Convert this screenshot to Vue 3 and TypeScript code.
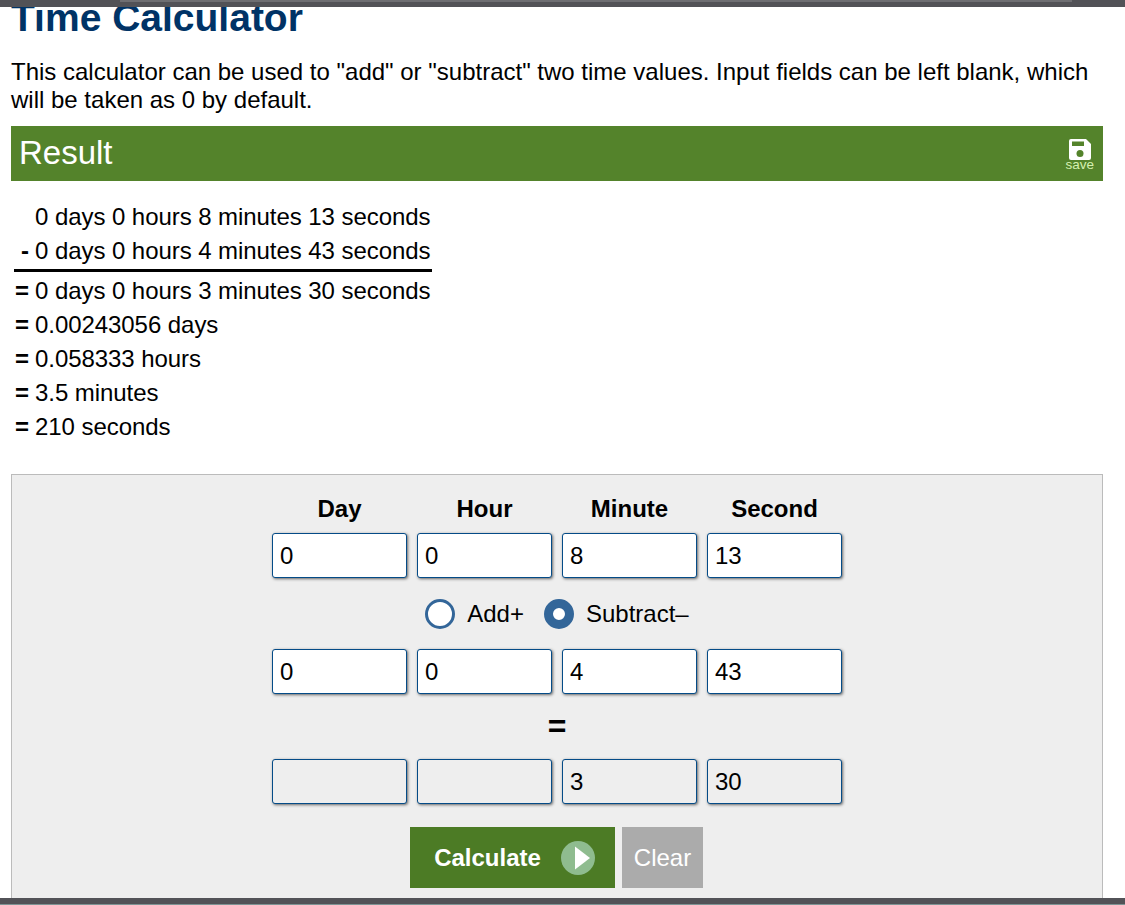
<script setup lang="ts">
const units = ['Day', 'Hour', 'Minute', 'Second'];
const first = ['0', '0', '8', '13'];
const second = ['0', '0', '4', '43'];
const answer = ['', '', '3', '30'];

const rows: [sign: string, text: string][] = [
  ['=', '0.00243056 days'],
  ['=', '0.058333 hours'],
  ['=', '3.5 minutes'],
  ['=', '210 seconds'],
];
</script>

<template>
  <div class="page">
    <div class="bar top"></div>
    <main class="content">
      <h1>Time Calculator</h1>
      <p class="intro">
        This calculator can be used to "add" or "subtract" two time values. Input fields can be left blank, which
        will be taken as 0 by default.
      </p>

      <div class="result-head">
        <span class="result-title">Result</span>
        <div class="save">
          <svg width="22" height="21" viewBox="0 0 22 21">
            <path d="M2 0H17L22 5V19A2 2 0 0 1 20 21H2A2 2 0 0 1 0 19V2A2 2 0 0 1 2 0Z" fill="#fff" />
            <rect x="3" y="2.5" width="12" height="4.5" fill="#54832b" />
            <circle cx="11" cy="14.5" r="3.5" fill="#54832b" />
          </svg>
          <span>save</span>
        </div>
      </div>

      <div class="result-body">
        <div class="line"><b></b>0 days 0 hours 8 minutes 13 seconds</div>
        <div class="line"><b>-</b>0 days 0 hours 4 minutes 43 seconds</div>
        <div class="rule"></div>
        <div class="line"><b>=</b>0 days 0 hours 3 minutes 30 seconds</div>
        <div v-for="[sign, text] of rows" :key="text" class="line">
          <b>{{ sign }}</b>{{ text }}
        </div>
      </div>

      <form class="panel" @submit.prevent>
        <div class="fields heads">
          <strong v-for="unit of units" :key="unit">{{ unit }}</strong>
        </div>
        <div class="fields">
          <input v-for="(v, i) of first" :key="i" type="text" :value="v" />
        </div>
        <div class="ops">
          <span class="radio"></span>
          <span class="op-label">Add+</span>
          <span class="radio on"></span>
          <span class="op-label">Subtract–</span>
        </div>
        <div class="fields">
          <input v-for="(v, i) of second" :key="i" type="text" :value="v" />
        </div>
        <div class="equals">=</div>
        <div class="fields">
          <input v-for="(v, i) of answer" :key="i" class="readonly" type="text" :value="v" readonly />
        </div>
        <div class="buttons">
          <button class="calc" type="submit">
            Calculate
            <svg width="34" height="34" viewBox="0 0 34 34">
              <circle cx="17" cy="17" r="17" fill="#8fbc8f" />
              <path d="M14 5.5L29 17L14 28.5Z" fill="#fff" />
            </svg>
          </button>
          <button class="clear" type="button">Clear</button>
        </div>
      </form>
    </main>
    <div class="bar bottom"></div>
  </div>
</template>

<style>
html,
body {
  margin: 0;
  overflow: hidden;
}
</style>

<style scoped>
.page {
  display: flex;
  flex-direction: column;
  height: 905px;
  font-family: 'Liberation Sans', Arial, sans-serif;
  font-size: 24px;
  color: #000;
  background: #fff;
}

.bar {
  flex: none;
  height: 7px;
  background: #525257;
}

.bar.top {
  background: linear-gradient(#6e6e72, #6e6e72) 120px 0 / 952px 2px no-repeat, #525257;
}

.bar.bottom {
  box-shadow: inset 0 -1px #7d9494;
}

.content {
  flex: 1;
  min-height: 0;
  overflow: hidden;
  padding: 0 22px 0 11px;
}

h1 {
  margin: -10px 0 0;
  font-size: 39px;
  line-height: 42px;
  font-weight: bold;
  color: #003366;
}

.intro {
  margin: 19px 0 0;
  line-height: 28px;
}

.result-head {
  display: flex;
  justify-content: space-between;
  align-items: center;
  height: 55px;
  margin-top: 12px;
  padding: 0 9px 0 8px;
  background: #54832b;
  color: #fff;
  font-size: 33px;
}

.result-title {
  margin-bottom: 2px;
}

.save {
  display: flex;
  flex-direction: column;
  align-items: center;
  margin-top: 1px;
  font-size: 13.5px;
  line-height: 10px;
  color: #d4f0b0;
}

.save svg {
  display: block;
}

.result-body {
  margin-top: 19px;
}

.line {
  display: flex;
  height: 34px;
  line-height: 34px;
  letter-spacing: -0.06px;
}

.line b {
  width: 24px;
  text-align: right;
  padding-right: 6px;
  box-sizing: border-box;
  font-weight: bold;
}

.rule {
  width: 418px;
  height: 3px;
  margin: 1px 0 2px 3px;
  background: #000;
}

.panel {
  display: flex;
  flex-direction: column;
  align-items: center;
  box-sizing: border-box;
  height: 500px;
  margin-top: 30px;
  border: 1px solid #bbb;
  background: #eee;
}

.fields {
  display: grid;
  grid-template-columns: repeat(4, 135px);
  column-gap: 10px;
}

.heads {
  height: 58px;
  line-height: 68px;
  text-align: center;
}

input {
  box-sizing: border-box;
  width: 135px;
  height: 45px;
  padding: 0 7px;
  border: 1px solid #044b87;
  border-radius: 3px;
  box-shadow: 1px 1px 3px #666;
  background: #fff;
  outline: none;
  font: inherit;
  color: #000;
}

input.readonly {
  background: #eee;
}

.ops {
  display: flex;
  align-items: center;
  box-sizing: border-box;
  height: 71px;
  padding-top: 1px;
}

.radio {
  box-sizing: border-box;
  width: 30px;
  height: 30px;
  border: 3px solid #336699;
  border-radius: 50%;
  background: #fff;
}

.radio.on {
  border-width: 9px;
}

.op-label {
  margin: 0 20px 0 12px;
}

.op-label:last-child {
  margin: 0 0 0 12px;
}

.equals {
  height: 65px;
  line-height: 65px;
  font-size: 32px;
  font-weight: bold;
}

.buttons {
  display: flex;
  gap: 7px;
  margin: 23px 1px 0 0;
}

button {
  height: 61px;
  padding: 0;
  border: none;
  font: inherit;
  color: #fff;
}

.calc {
  display: flex;
  align-items: center;
  justify-content: center;
  gap: 20px;
  box-sizing: border-box;
  width: 205px;
  padding-left: 4px;
  background: #4c7b25;
  font-weight: bold;
}

.clear {
  width: 81px;
  background: #ababab;
}
</style>
